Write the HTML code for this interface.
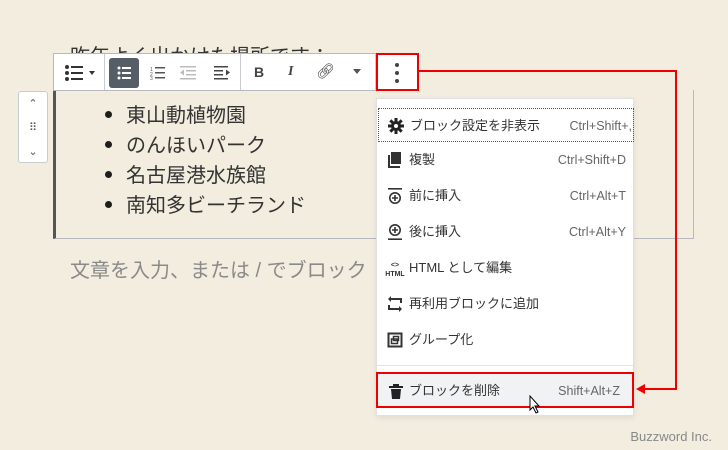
<!DOCTYPE html>
<html><head><meta charset="utf-8"><style>
*{margin:0;padding:0;box-sizing:border-box}
body{width:728px;height:450px;background:#f3ede0;position:relative;overflow:hidden;font-family:"Liberation Sans","Noto Sans CJK JP",sans-serif;color:#1e1e1e}
.abs{position:absolute}
.tb{left:53px;top:53px;width:365px;height:38px;background:#fff;border:1px solid #b5b8bc;}
.sep{position:absolute;top:0;width:1px;height:36px;background:#c8ccd0}
.block{left:53px;top:90px;width:641px;height:149px;border:1px solid #b5b8bc;border-left:3px solid #555;border-top:none}
ul{position:absolute;left:71px;top:101px;font-size:20px;line-height:30px;list-style:none;color:#333}
ul li:before{content:"";display:inline-block;width:7px;height:7px;border-radius:50%;background:#1e1e1e;margin:0 14px 4px 34px;vertical-align:middle}
.menu{left:376px;top:98px;width:258px;height:318px;background:#fff;border:1px solid #e0e0e0;box-shadow:0 2px 6px rgba(0,0,0,.08)}
.it{position:absolute;left:8px;width:247px;height:34px;font-size:13px;color:#333;line-height:34px}
.it .ic{position:absolute;left:2px;top:9px;width:16px;height:16px}
.it .t{position:absolute;left:24px}
.it .k{position:absolute;right:6px;color:#666;font-size:12.5px}
</style></head><body>
<div class="abs" style="left:70px;top:40px;font-size:20px;color:#333">昨年よく出かけた場所です：</div>
<div class="abs block" style="background:#f3ede0"></div>
<ul><li>東山動植物園</li><li>のんほいパーク</li><li>名古屋港水族館</li><li>南知多ビーチランド</li></ul>
<div class="abs" style="left:70px;top:254px;font-size:20px;color:#8a8a8a">文章を入力、または / でブロック</div>
<div class="abs" style="left:18px;top:91px;width:30px;height:72px;background:#fff;border:1px solid #c8ccd0;border-radius:3px;font-size:11px;color:#555;text-align:center;line-height:24px">⌃<br>⠿<br>⌄</div>
<div class="abs tb">
 <svg class="abs" style="left:10px;top:10px" width="32" height="18"><g fill="#333"><circle cx="3" cy="3" r="2"/><circle cx="3" cy="9" r="2"/><circle cx="3" cy="15" r="2"/><rect x="7" y="2" width="12" height="2"/><rect x="7" y="8" width="12" height="2"/><rect x="7" y="14" width="12" height="2"/><path d="M25 7h6l-3 4z"/></g></svg>
 <div class="sep" style="left:50px"></div>
 <div class="abs" style="left:55px;top:4px;width:30px;height:30px;background:#555d66;border-radius:3px"><svg class="abs" style="left:8px;top:8px" width="14" height="14"><g fill="#fff"><circle cx="2" cy="2" r="1.5"/><circle cx="2" cy="7" r="1.5"/><circle cx="2" cy="12" r="1.5"/><rect x="5" y="1" width="9" height="2"/><rect x="5" y="6" width="9" height="2"/><rect x="5" y="11" width="9" height="2"/></g></svg></div>
 <svg class="abs" style="left:96px;top:12px" width="16" height="14"><g fill="#555"><text x="0" y="5" font-size="5">1</text><text x="0" y="10" font-size="5">2</text><text x="0" y="14" font-size="5">3</text><rect x="5" y="1" width="10" height="1.5"/><rect x="5" y="6" width="10" height="1.5"/><rect x="5" y="11" width="10" height="1.5"/></g></svg>
 <svg class="abs" style="left:126px;top:12px" width="16" height="14"><g fill="#bbb"><rect x="0" y="0" width="16" height="1.5"/><rect x="6" y="4" width="10" height="1.5"/><rect x="6" y="8" width="10" height="1.5"/><rect x="0" y="12" width="16" height="1.5"/><path d="M0 6.5l4-3v6z"/></g></svg>
 <svg class="abs" style="left:160px;top:12px" width="16" height="14"><g fill="#444"><rect x="0" y="0" width="14" height="1.5"/><rect x="0" y="4" width="9" height="1.5"/><rect x="0" y="8" width="9" height="1.5"/><rect x="0" y="12" width="14" height="1.5"/><path d="M16 6.5l-4-3v6z"/></g></svg>
 <div class="sep" style="left:186px"></div>
 <div class="abs" style="left:200px;top:10px;font-weight:bold;font-size:14px;color:#444">B</div>
 <div class="abs" style="left:234px;top:10px;font-style:italic;font-weight:bold;font-size:14px;color:#444;font-family:'Liberation Serif',serif">I</div>
 <div class="abs" style="left:262px;top:8px;font-size:15px;color:#444">🔗︎</div>
 <svg class="abs" style="left:299px;top:15px" width="8" height="6"><path d="M0 0h8l-4 5z" fill="#555"/></svg>
 <div class="sep" style="left:321px"></div>
 <svg class="abs" style="left:340px;top:8px" width="6" height="22"><g fill="#444"><circle cx="3" cy="3" r="2"/><circle cx="3" cy="11" r="2"/><circle cx="3" cy="19" r="2"/></g></svg>
</div>
<div class="abs" style="left:376px;top:53px;width:43px;height:38px;border:2px solid #e00"></div>
<div class="abs menu">
 <div class="it" style="top:9px;left:1px;width:256px;border:1px dotted #555"><svg class="ic" style="left:9px" viewBox="0 0 16 16"><circle cx="8" cy="8" r="5" fill="#222"/><circle cx="8" cy="8" r="2" fill="#fff"/><g stroke="#222" stroke-width="3"><path d="M8 0v16M0 8h16M2.3 2.3l11.4 11.4M13.7 2.3L2.3 13.7"/></g><circle cx="8" cy="8" r="2" fill="#fff"/></svg><span class="t" style="left:31px">ブロック設定を非表示</span><span class="k" style="right:1px">Ctrl+Shift+,</span></div>
 <div class="it" style="top:44px"><svg class="ic" viewBox="0 0 16 16"><path fill="#333" d="M4 0h10v12H4zM1 3h2v11h10v2H1z"/></svg><span class="t">複製</span><span class="k">Ctrl+Shift+D</span></div>
 <div class="it" style="top:80px"><svg class="ic" viewBox="0 0 16 16"><rect x="1" y="0" width="14" height="1.6" fill="#333"/><circle cx="8" cy="10" r="5.2" fill="none" stroke="#333" stroke-width="1.6"/><path d="M7.2 7h1.6v6H7.2zM5 9.2h6v1.6H5z" fill="#333"/></svg><span class="t">前に挿入</span><span class="k">Ctrl+Alt+T</span></div>
 <div class="it" style="top:116px"><svg class="ic" viewBox="0 0 16 16"><rect x="1" y="14.4" width="14" height="1.6" fill="#333"/><circle cx="8" cy="6" r="5.2" fill="none" stroke="#333" stroke-width="1.6"/><path d="M7.2 3h1.6v6H7.2zM5 5.2h6v1.6H5z" fill="#333"/></svg><span class="t">後に挿入</span><span class="k">Ctrl+Alt+Y</span></div>
 <div class="it" style="top:152px"><span class="abs" style="left:0;font-size:7px;font-weight:bold;line-height:9px;top:10px;text-align:center;width:20px">&lt;&gt;<br>HTML</span><span class="t">HTML として編集</span></div>
 <div class="it" style="top:188px"><svg class="ic" viewBox="0 0 16 16"><path fill="#333" d="M1 9h2v3h9v-2l3 3-3 3v-2H1zM15 7h-2V4H4v2L1 3l3-3v2h11z"/></svg><span class="t">再利用ブロックに追加</span></div>
 <div class="it" style="top:224px"><svg class="ic" viewBox="0 0 16 16"><rect x="1.5" y="1.5" width="13" height="13" fill="none" stroke="#333" stroke-width="2"/><rect x="4.5" y="7" width="6" height="4.5" fill="none" stroke="#333" stroke-width="1.5"/><rect x="6.5" y="4.5" width="5" height="4" fill="none" stroke="#333" stroke-width="1.5"/></svg><span class="t">グループ化</span></div>
 <div class="abs" style="left:0;top:266px;width:256px;height:1px;background:#e2e4e7"></div>
 <div class="it" style="top:275px;left:1px;width:256px;background:#f1f2f4"><svg class="ic" style="left:10px" viewBox="0 0 16 16"><path fill="#222" d="M5 1h6v2h4v2H1V3h4zM3 6h10l-1 10H4z"/></svg><span class="t" style="left:31px">ブロックを削除</span><span class="k" style="right:14px">Shift+Alt+Z</span></div>
</div>
<div class="abs" style="left:376px;top:372px;width:258px;height:36px;border:2px solid #e00"></div>
<svg class="abs" style="left:0;top:0" width="728" height="450"><path d="M419 71H676V389H644" fill="none" stroke="#e00" stroke-width="2"/><path d="M636 389l9-5v10z" fill="#e00"/><path d="M530 396v14l3-3 3 6 2-1-3-6h4z" fill="#fff" stroke="#000" stroke-width="1"/></svg>
<div class="abs" style="right:16px;top:429px;font-size:13px;color:#888">Buzzword Inc.</div>
</body></html>
